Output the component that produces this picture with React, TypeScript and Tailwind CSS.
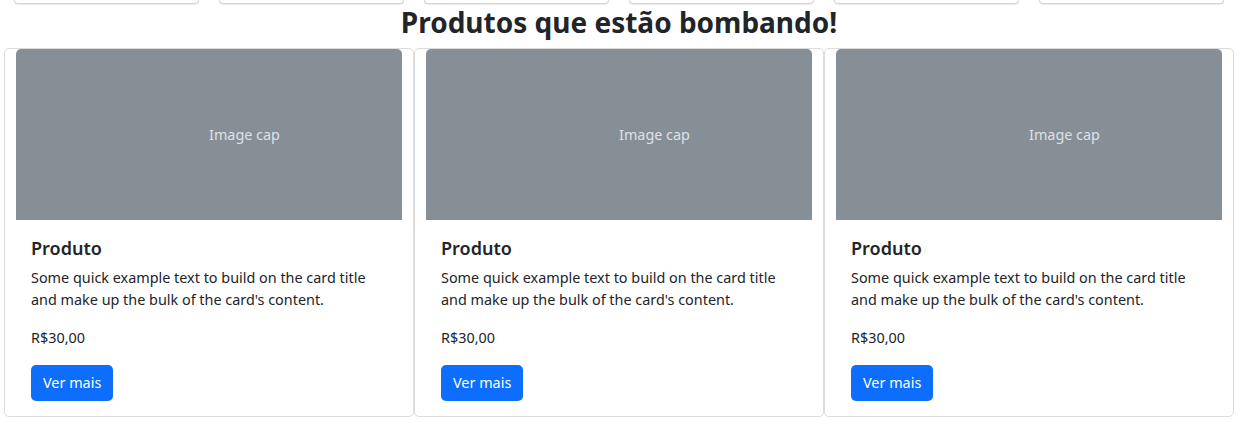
import React from 'react';

type Product = {
  id: number;
  title: string;
  text: string;
  price: string;
};

const products: Product[] = [
  {
    id: 1,
    title: 'Produto',
    text: "Some quick example text to build on the card title and make up the bulk of the card's content.",
    price: 'R$30,00',
  },
  {
    id: 2,
    title: 'Produto',
    text: "Some quick example text to build on the card title and make up the bulk of the card's content.",
    price: 'R$30,00',
  },
  {
    id: 3,
    title: 'Produto',
    text: "Some quick example text to build on the card title and make up the bulk of the card's content.",
    price: 'R$30,00',
  },
];

const categories = [1, 2, 3, 4, 5, 6];

const ProductCard = ({ product }: { product: Product }) => {
  return (
    <div className="flex flex-col border border-[#dcdcdc] rounded-[5px] bg-white px-[11px]">
      {/* placeholder image, label starts at the horizontal middle */}
      <div className="flex h-[171px] items-center bg-[#868e96] rounded-t-[5px]">
        <span className="ml-[50%] text-[#dee2e6] text-[14.4px]">Image cap</span>
      </div>
      <div className="px-[15px] pt-[17px] pb-[15px]">
        <h5 className="text-[18px] font-semibold leading-[22px] mb-[8px]">{product.title}</h5>
        <p className="text-[14.4px] leading-[22px] mb-[16px]">{product.text}</p>
        <p className="text-[14.4px] leading-[22px] mb-[16px]">{product.price}</p>
        <button className="bg-[#0d6efd] text-white text-[14.4px] leading-[22px] rounded-[5px] px-[12px] py-[7px]">
          Ver mais
        </button>
      </div>
    </div>
  );
};

const App = () => {
  return (
    <div
      className="w-[1238px] h-[433px] overflow-hidden bg-white text-[#212529]"
      style={{ fontFamily: '"Noto Sans", "Open Sans", sans-serif' }}
    >
      {/* bottom edge of the category row above */}
      <div className="grid grid-cols-6 px-[4px]">
        {categories.map((c) => (
          <div key={c} className="px-[10px]">
            <div className="h-[4px] border border-t-0 border-[#d4d4d4] rounded-b-[5px] shadow-[0_1px_1px_rgba(0,0,0,0.08)]"></div>
          </div>
        ))}
      </div>
      <h2 className="text-center text-[28px] font-bold leading-[36px] mb-[8px]">
        Produtos que estão bombando!
      </h2>
      <div className="grid grid-cols-3 px-[4px]">
        {products.map((p) => (
          <ProductCard key={p.id} product={p} />
        ))}
      </div>
    </div>
  );
};

export default App;
